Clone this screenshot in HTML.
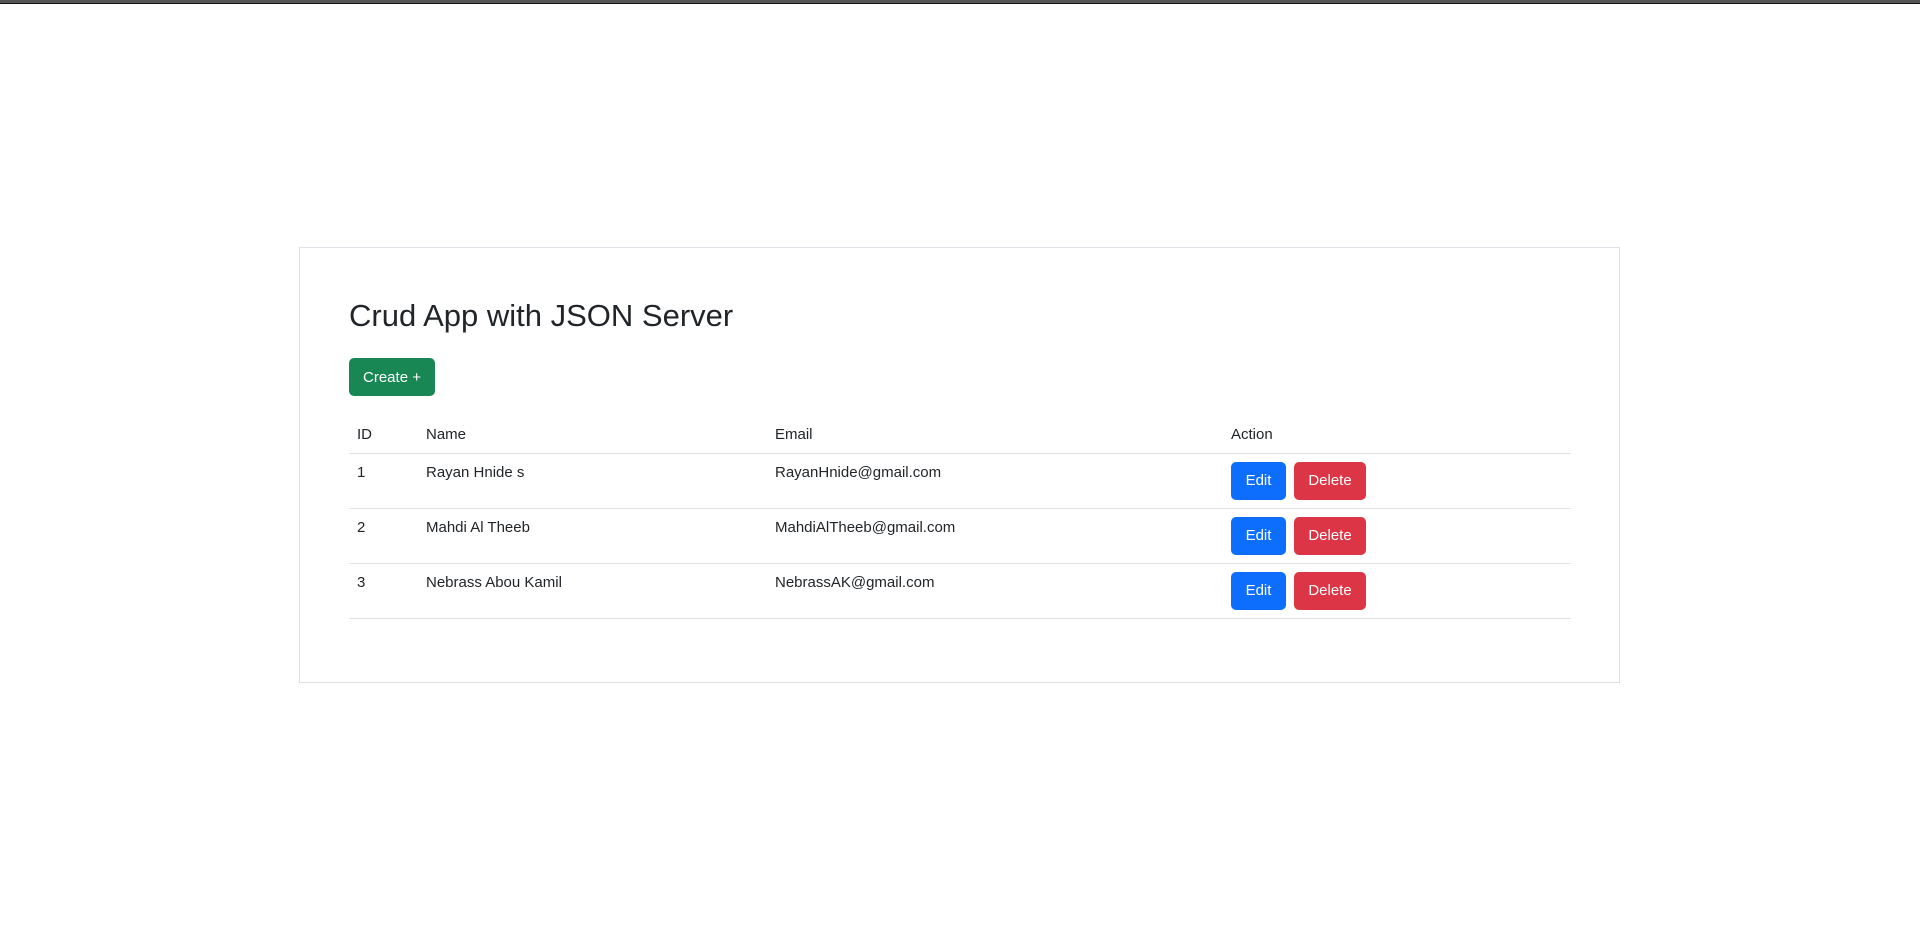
<!DOCTYPE html>
<html><head><meta charset="utf-8"><style>
*{box-sizing:border-box;margin:0;padding:0}
body{width:1920px;height:925px;background:#fff;font-family:"Liberation Sans",sans-serif;color:#212529;position:relative;overflow:hidden;font-size:15px}
.top{position:absolute;left:0;top:0;width:1920px;height:4px;background:#555;border-bottom:1px solid #111}
.card{position:absolute;left:299px;top:247px;width:1321px;height:436px;border:1px solid #dee2e6}
h2{position:absolute;left:49px;top:48px;font-size:31px;font-weight:400;line-height:40px;white-space:nowrap}
.btn{position:absolute;color:#fff;border-radius:5px;font-size:15px;text-align:center;line-height:38px;height:38px}
.create{left:49px;top:110px;width:86px;background:#198754;line-height:40px}
table{position:absolute;left:49px;top:168px;width:1222px;border-collapse:collapse}
td,th{font-weight:400;text-align:left;vertical-align:top;padding:8px;border-bottom:1px solid #dee2e6;line-height:20px;white-space:nowrap}
th{height:37px;padding-top:9px}
td{height:55px;padding-top:9px;position:relative}
.e{left:8px;top:8px;width:55px;background:#0d6efd}
.d{left:71px;top:8px;width:72px;background:#dc3545}
</style></head><body>
<div class="top"></div>
<div class="card">
<h2>Crud App with JSON Server</h2>
<div class="btn create">Create +</div>
<table>
<tr><th style="width:69px">ID</th><th style="width:349px">Name</th><th style="width:456px">Email</th><th>Action</th></tr>
<tr><td>1</td><td>Rayan Hnide s</td><td>RayanHnide@gmail.com</td><td><div class="btn e">Edit</div><div class="btn d">Delete</div></td></tr>
<tr><td>2</td><td>Mahdi Al Theeb</td><td>MahdiAlTheeb@gmail.com</td><td><div class="btn e">Edit</div><div class="btn d">Delete</div></td></tr>
<tr><td>3</td><td>Nebrass Abou Kamil</td><td>NebrassAK@gmail.com</td><td><div class="btn e">Edit</div><div class="btn d">Delete</div></td></tr>
</table>
</div>
</body></html>
